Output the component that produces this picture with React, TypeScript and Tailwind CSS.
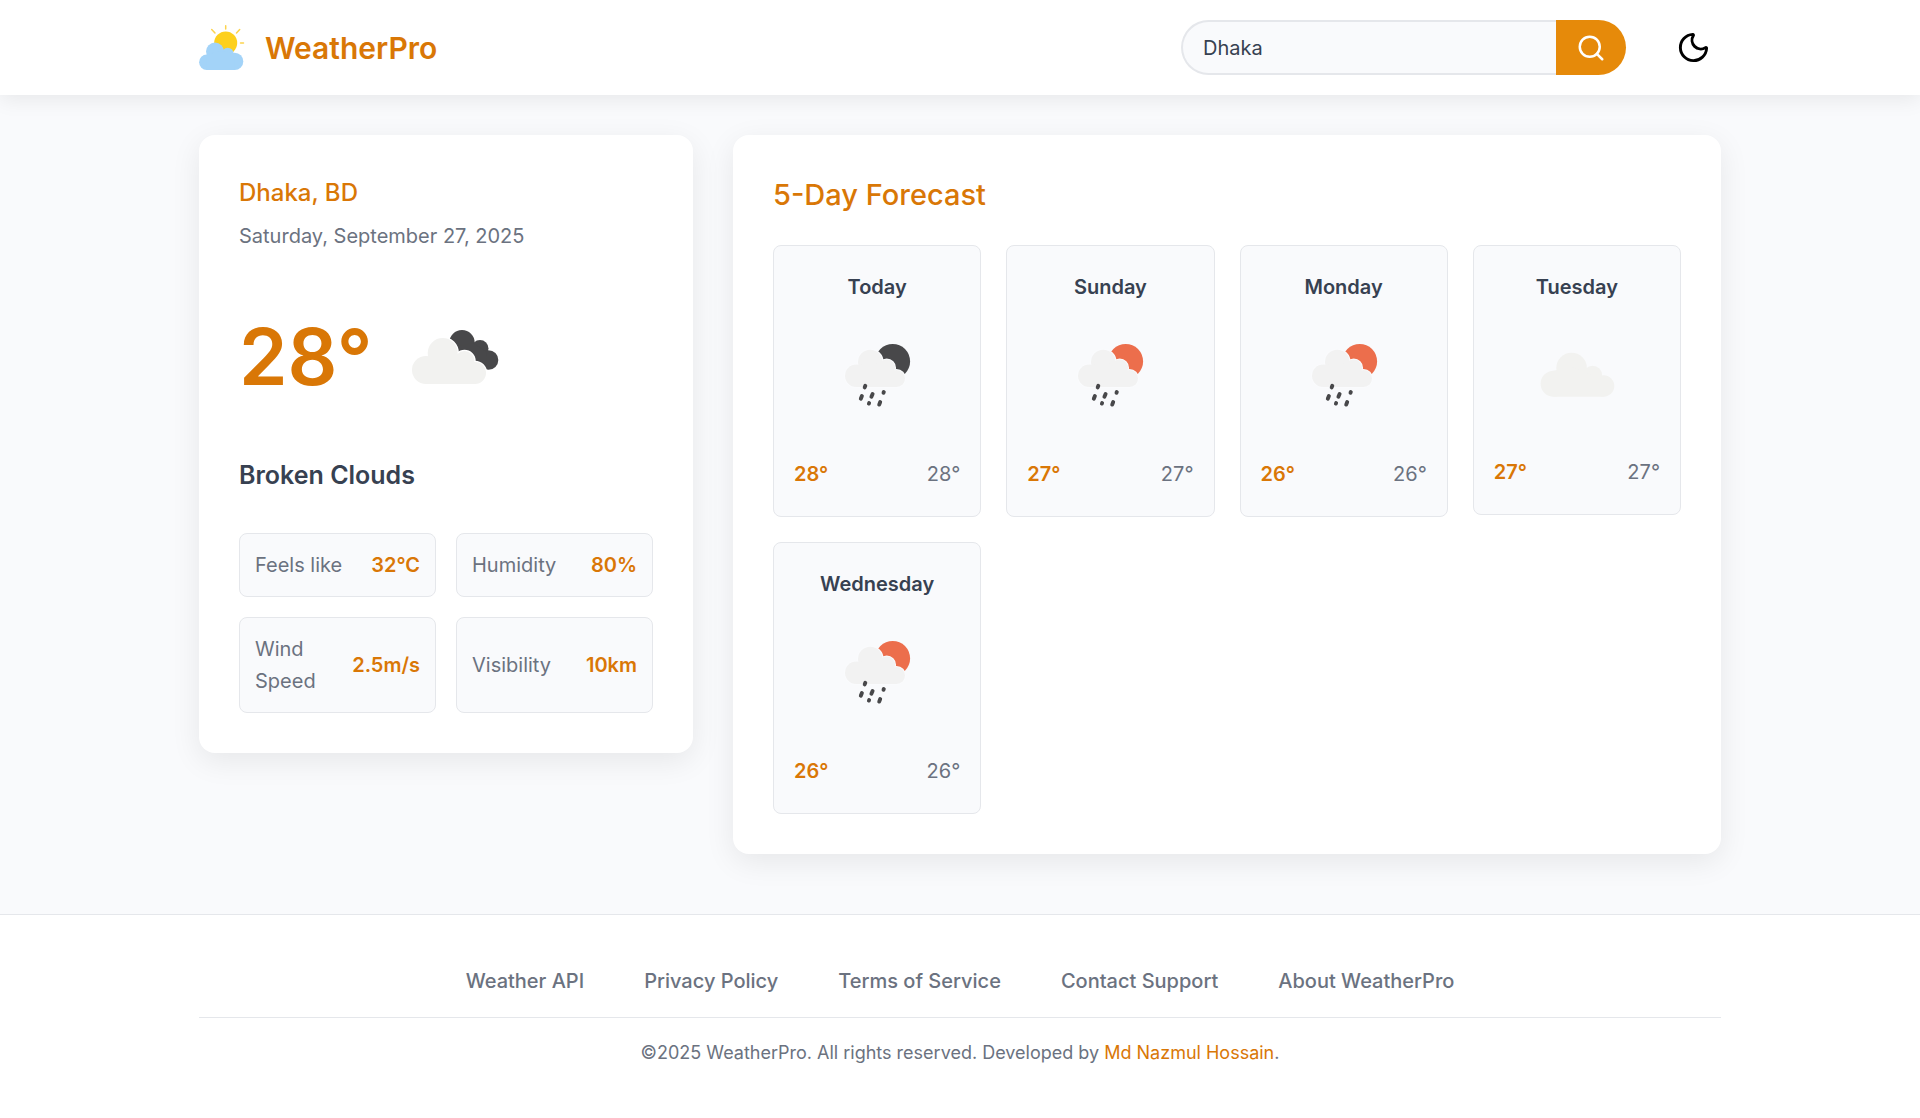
import { useState } from "react";
import { Moon, Search } from "lucide-react";

type Sky = "rain-night" | "rain-day" | "cloud";

type Day = { name: string; sky: Sky; high: number; low: number };

const DAYS: Day[] = [
  { name: "Today", sky: "rain-night", high: 28, low: 28 },
  { name: "Sunday", sky: "rain-day", high: 27, low: 27 },
  { name: "Monday", sky: "rain-day", high: 26, low: 26 },
  { name: "Tuesday", sky: "cloud", high: 27, low: 27 },
  { name: "Wednesday", sky: "rain-day", high: 26, low: 26 },
];

const STATS = [
  { label: "Feels like", value: "32°C" },
  { label: "Humidity", value: "80%" },
  { label: "Wind Speed", value: "2.5m/s" },
  { label: "Visibility", value: "10km" },
];

const LINKS = ["Weather API", "Privacy Policy", "Terms of Service", "Contact Support", "About WeatherPro"];

function Logo() {
  return (
    <svg viewBox="0 1 46 46" className="size-[46px]" aria-hidden="true">
      <path
        d="M26.700 1.800V5M12.700 5.500L16 9M40.700 5.500L37.500 9M41.500 19h3"
        stroke="#fcd34d"
        strokeWidth="1.500"
        strokeLinecap="round"
      />
      <circle cx="26.700" cy="19" r="11.500" fill="#fdd01e" />
      <g fill="#a3d3f8">
        <circle cx="7.800" cy="38.300" r="7.700" />
        <circle cx="16" cy="27.500" r="9" />
        <circle cx="28.700" cy="29.700" r="6" />
        <circle cx="35.700" cy="37.400" r="8.600" />
        <path d="M7.800 46V33L16 27L29 28L35.700 33V46Z" />
      </g>
    </svg>
  );
}

function BigCloudShape() {
  return (
    <>
      <circle cx="33" cy="69" r="14" />
      <circle cx="49.700" cy="52" r="15" />
      <circle cx="71.500" cy="60" r="10" />
      <circle cx="82" cy="72" r="11" />
      <path d="M33 83V60L50 52L72 60L82 70V83Z" />
    </>
  );
}

function BrokenClouds() {
  return (
    <svg viewBox="2 -4 120 120" className="size-[120px]" role="img" aria-label="Broken clouds">
      <g fill="#48484a">
        <circle cx="69" cy="41.700" r="12.700" />
        <circle cx="87" cy="47.500" r="8.500" />
        <circle cx="95.500" cy="59" r="9.800" />
        <path d="M62 46L80 42L94 51L92 68L80 64Z" />
      </g>
      <g fill="#fff" stroke="#fff" strokeWidth="2.400">
        <BigCloudShape />
      </g>
      <g fill="#f2f2f0">
        <BigCloudShape />
      </g>
    </svg>
  );
}

function RainCloudShape() {
  return (
    <>
      <circle cx="31.300" cy="52.700" r="11.300" />
      <circle cx="45.300" cy="39" r="12.300" />
      <circle cx="61.700" cy="45" r="8.400" />
      <circle cx="71.500" cy="55.500" r="8.500" />
      <path d="M31.300 64V44L45 38L62 44L71.500 54V64Z" />
    </>
  );
}

function Rain({ night }: { night: boolean }) {
  return (
    <svg viewBox="0 1 104 104" className="size-[104px]" role="img" aria-label="Rain">
      <circle cx="67.700" cy="38.400" r="17.400" fill={night ? "#48484a" : "#ec6e4c"} />
      <g fill="#fafbfd" stroke="#fafbfd" strokeWidth="2">
        <RainCloudShape />
      </g>
      <g fill="#f2f2f2">
        <RainCloudShape />
      </g>
      <path
        d="M40.300 62.800l-.6 1.600M36.900 73l-1.100 2.800M47.600 71l-1.200 2.800M58.800 69l-.3 .8M44.100 80.100l-.2 .5M55.200 79l-1 2.600"
        stroke="#48484a"
        strokeWidth="3.900"
        strokeLinecap="round"
      />
    </svg>
  );
}

function Cloud() {
  return (
    <svg viewBox="0 1 104 102" className="h-[102px] w-[104px]" role="img" aria-label="Cloudy">
      <g fill="#f2f2f0">
        <circle cx="28.600" cy="60.700" r="13" />
        <circle cx="46.600" cy="45" r="15.300" />
        <circle cx="67.600" cy="52.200" r="9.500" />
        <circle cx="78.600" cy="63" r="10.700" />
        <path d="M28.600 73.700V47.700L46 44L67 52L78.600 56V73.700Z" />
      </g>
    </svg>
  );
}

function ForecastCard({ day }: { day: Day }) {
  return (
    <article className="flex flex-col items-center rounded-lg border border-[#e5e7eb] bg-[#f9fafc] px-5 py-[25px]">
      <h3 className="font-semibold leading-[33px]">{day.name}</h3>
      <div className="mt-5 mb-[30px]">
        {day.sky === "cloud" ? <Cloud /> : <Rain night={day.sky === "rain-night"} />}
      </div>
      <div className="flex w-full justify-between leading-[33px]">
        <span className="font-semibold text-[#d97706]">{day.high}°</span>
        <span className="text-[#6b7280]">{day.low}°</span>
      </div>
    </article>
  );
}

export default function App() {
  const [city, setCity] = useState("Dhaka");

  return (
    <div className="flex min-h-screen flex-col bg-[#f9fafc] font-[Inter,sans-serif] text-xl text-[#374151]">
      <header className="relative bg-white px-10 py-5 shadow-[0_4px_20px_rgba(0,0,0,0.08)]">
        <div className="mx-auto flex max-w-[1522px] items-center justify-between">
          <a href="#" className="flex items-center gap-5 text-[#d97706]">
            <Logo />
            <span className="text-3xl font-semibold">WeatherPro</span>
          </a>
          <div className="flex items-center gap-10">
            <form className="flex h-[55px] w-[445px]" onSubmit={(e) => e.preventDefault()}>
              <input
                type="text"
                aria-label="Search city"
                value={city}
                onChange={(e) => setCity(e.target.value)}
                className="min-w-0 flex-1 rounded-l-full border-2 border-r-0 border-[#e5e7eb] bg-[#f9fafc] px-5 outline-none"
              />
              <button
                type="submit"
                aria-label="Search"
                className="flex w-[70px] items-center justify-center rounded-r-full bg-[#e68a0a] text-white"
              >
                <Search size={30} />
              </button>
            </form>
            <button type="button" aria-label="Switch to dark mode" className="p-2.5 text-black">
              <Moon size={35} />
            </button>
          </div>
        </div>
      </header>

      <main className="flex-1 px-10 pt-10 pb-[60px]">
        <div className="mx-auto grid max-w-[1522px] grid-cols-1 items-start gap-10 lg:grid-cols-[1fr_2fr]">
          <section className="rounded-2xl bg-white p-10 shadow-[0_8px_30px_rgba(0,0,0,0.08)]">
            <h2 className="text-2xl leading-9 font-medium text-[#d97706]">Dhaka, BD</h2>
            <p className="mt-[9px] leading-[33px] text-[#6b7280]">Saturday, September 27, 2025</p>
            <div className="mt-11 flex items-center gap-[22px]">
              <span className="text-[78px] leading-none font-semibold text-[#d97706]">28°</span>
              <BrokenClouds />
            </div>
            <p className="mt-10 text-[25px] leading-9 font-semibold">Broken Clouds</p>
            <dl className="mt-10 grid grid-cols-2 gap-5">
              {STATS.map((s) => (
                <div
                  key={s.label}
                  className="flex items-center justify-between gap-2 rounded-lg border border-[#e5e7eb] bg-[#f9fafc] p-[15px] leading-8"
                >
                  <dt className="text-[#6b7280]">{s.label}</dt>
                  <dd className="font-semibold text-[#d97706]">{s.value}</dd>
                </div>
              ))}
            </dl>
          </section>

          <section className="rounded-2xl bg-white p-10 shadow-[0_8px_30px_rgba(0,0,0,0.08)]">
            <h2 className="text-[29px] leading-10 font-medium text-[#d97706]">5-Day Forecast</h2>
            <div className="mt-[30px] grid grid-cols-2 items-start gap-[25px] xl:grid-cols-4">
              {DAYS.map((d) => (
                <ForecastCard key={d.name} day={d} />
              ))}
            </div>
          </section>
        </div>
      </main>

      <footer className="border-t border-[#e5e7eb] bg-white px-10 py-[50px] text-[#6b7280]">
        <div className="mx-auto max-w-[1522px]">
          <nav className="flex flex-wrap justify-center gap-x-[60px] border-b border-[#e5e7eb] pb-5 leading-8 font-medium">
            {LINKS.map((l) => (
              <a key={l} href="#">
                {l}
              </a>
            ))}
          </nav>
          <p className="mt-5 text-center text-lg leading-[30px]">
            ©2025 WeatherPro. All rights reserved. Developed by{" "}
            <a href="#" className="text-[#d97706]">
              Md Nazmul Hossain
            </a>
            .
          </p>
        </div>
      </footer>
    </div>
  );
}
